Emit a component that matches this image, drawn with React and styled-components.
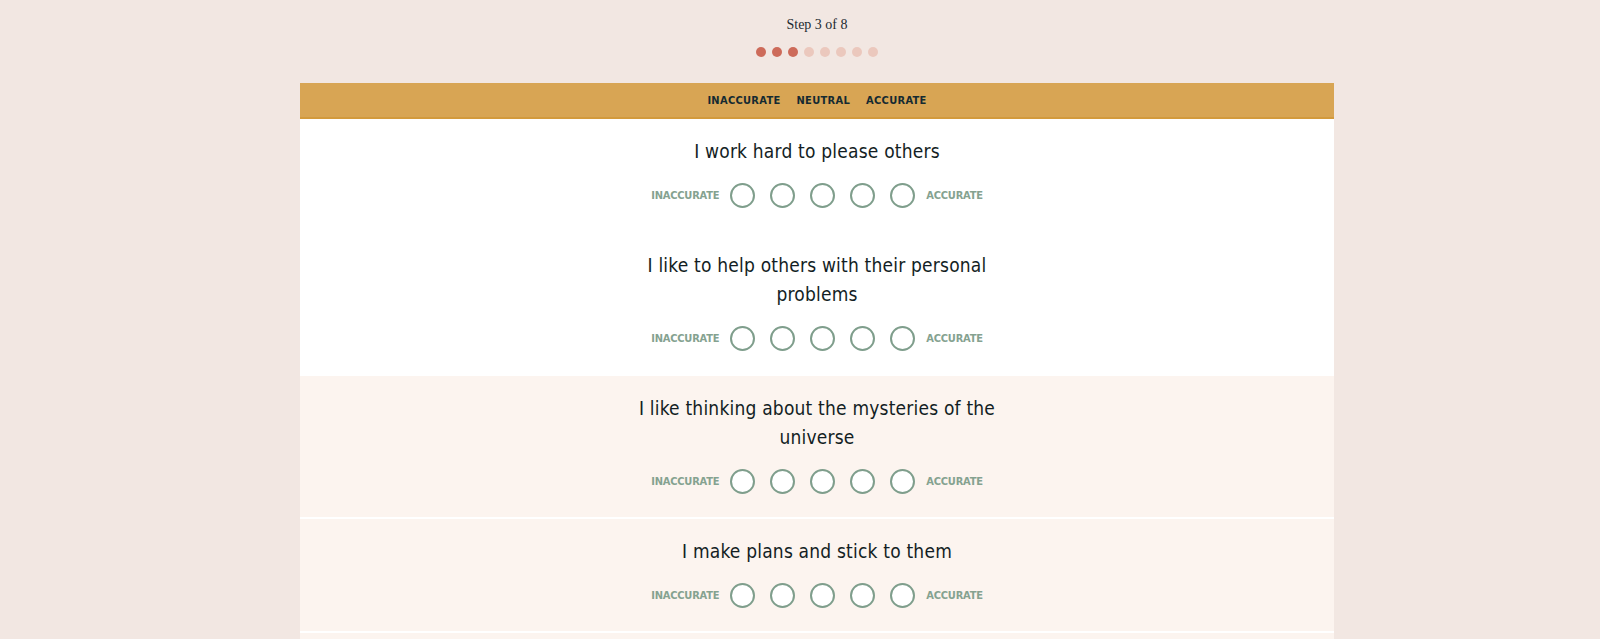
import React, { useState } from "react";
import styled, { createGlobalStyle } from "styled-components";

const GlobalStyle = createGlobalStyle`
  body {
    margin: 0;
    background: #f2e7e2;
    font-family: "DejaVu Sans Condensed", "DejaVu Sans", sans-serif;
  }
`;

const questions = [
  { text: "I work hard to please others", tone: "white" },
  { text: "I like to help others with their personal problems", tone: "white" },
  { text: "I like thinking about the mysteries of the universe", tone: "cream" },
  { text: "I make plans and stick to them", tone: "cream" },
  { text: "I am always prepared", tone: "cream" },
];

export default function App() {
  const [answers, setAnswers] = useState({});

  return (
    <>
      <GlobalStyle />
      <Page>
        <StepLabel>Step 3 of 8</StepLabel>
        <Dots>
          {Array.from({ length: 8 }).map((_, i) => (
            <Dot key={i} active={i < 3} />
          ))}
        </Dots>
        <Card>
          <Legend>
            <span>Inaccurate</span>
            <span>Neutral</span>
            <span>Accurate</span>
          </Legend>
          {questions.map((q, qi) => (
            <Question key={qi} tone={q.tone}>
              <Title>{q.text}</Title>
              <Scale>
                <ScaleLabel>Inaccurate</ScaleLabel>
                {[1, 2, 3, 4, 5].map((v) => (
                  <Radio
                    key={v}
                    selected={answers[qi] === v}
                    onClick={() => setAnswers({ ...answers, [qi]: v })}
                  />
                ))}
                <ScaleLabel>Accurate</ScaleLabel>
              </Scale>
            </Question>
          ))}
        </Card>
      </Page>
    </>
  );
}

const Page = styled.div`
  width: 1034px;
  margin-left: 300px;
  padding-top: 16px;
  display: flex;
  flex-direction: column;
  align-items: center;
`;

const StepLabel = styled.div`
  font-family: "Liberation Serif", serif;
  font-size: 14px;
  line-height: 18px;
  color: #1d2a30;
`;

const Dots = styled.div`
  display: flex;
  gap: 6px;
  margin-top: 13px;
`;

const Dot = styled.span`
  width: 10px;
  height: 10px;
  border-radius: 50%;
  background: ${(props) => (props.active ? "#cd6b5a" : "#ebc8bd")};
`;

const Card = styled.div`
  align-self: stretch;
  margin-top: 26px;
  background: #fff;
`;

const Legend = styled.div`
  height: 34px;
  background: #d8a554;
  border-bottom: 2px solid #d39a3c;
  display: flex;
  align-items: center;
  justify-content: center;
  gap: 16px;
  font-weight: bold;
  font-size: 11px;
  letter-spacing: 0.3px;
  text-transform: uppercase;
  color: #152a31;
`;

const Question = styled.div`
  background: ${(props) => (props.tone === "cream" ? "#fcf4ef" : "#fff")};
  border-bottom: 2px solid #fff;
  padding: 18px 0 23px;
  display: flex;
  flex-direction: column;
  align-items: center;
`;

const Title = styled.div`
  max-width: 370px;
  text-align: center;
  font-size: 19px;
  line-height: 29px;
  letter-spacing: 0.2px;
  color: #131e24;
`;

const Scale = styled.div`
  margin-top: 17px;
  display: flex;
  align-items: center;
  gap: 15px;
`;

const ScaleLabel = styled.span`
  font-weight: bold;
  font-size: 11px;
  letter-spacing: -0.2px;
  text-transform: uppercase;
  color: #85a290;
  margin: 0 -4px;
`;

const Radio = styled.button`
  width: 25px;
  height: 25px;
  padding: 0;
  border-radius: 50%;
  border: 2px solid #7f9e8c;
  background: ${(props) => (props.selected ? "#7f9e8c" : "#fff")};
  cursor: pointer;
`;
